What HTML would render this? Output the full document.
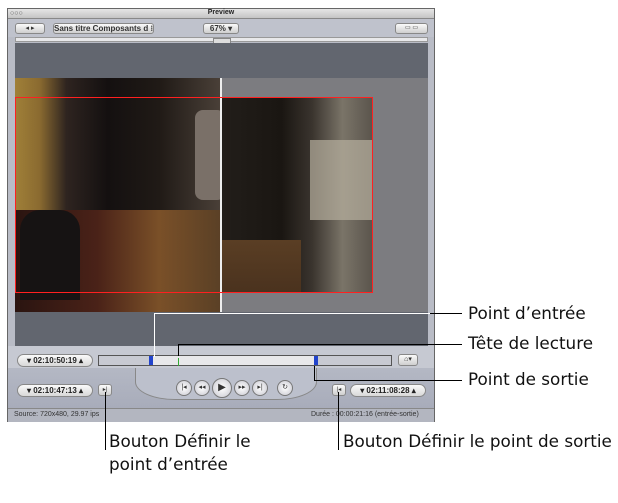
<!DOCTYPE html><html><head><style>
body{margin:0;width:618px;height:503px;background:#fff;position:relative;overflow:hidden;font-family:"Liberation Sans",sans-serif}
.a{position:absolute}
.win{left:7px;top:8px;width:428px;height:414px;background:#b9bcc6;border:1px solid #666;box-sizing:border-box}
.pill{position:absolute;height:11px;border:1px solid #888;border-radius:7px;background:linear-gradient(#fafafa,#d8d8d8);font-size:8px;font-weight:bold;line-height:11px;color:#222;text-align:center}
.btn{position:absolute;border:1px solid #888;border-radius:3px;background:linear-gradient(#fafafa,#cfcfcf);font-size:8px;line-height:11px;text-align:center;color:#333}
.circ{position:absolute;width:14px;height:14px;border:1px solid #777;border-radius:50%;background:radial-gradient(#fff,#c8c8d0);font-size:7px;line-height:14px;text-align:center;color:#333}
.lab{position:absolute;font-size:16.8px;color:#111;white-space:nowrap;font-family:"DejaVu Sans","Liberation Sans",sans-serif;letter-spacing:0}
.ln{position:absolute;background:#000}
.r{position:absolute;background:#ff2020}
</style></head><body>
<div class="a win"></div>
<div class="a" style="left:8px;top:9px;width:426px;height:9px;background:linear-gradient(#e6e6e6,#c4c4c4);border-bottom:1px solid #888"></div>
<div class="a" style="left:10px;top:10px;font-size:7px;color:#555">○○○</div>
<div class="a" style="left:0;top:9px;width:442px;text-align:center;font-size:7px;font-weight:bold;color:#222">Preview</div>
<div class="a" style="left:8px;top:19px;width:426px;height:18px;background:#bfc2cc"></div>
<div class="btn" style="left:15px;top:23px;width:28px;height:9px;line-height:9px;font-size:7px">◂ ▸</div>
<div class="btn" style="left:53px;top:23px;width:99px;height:9px;line-height:9px;font-weight:bold">Sans titre Composants d ⁝</div>
<div class="btn" style="left:203px;top:23px;width:34px;height:9px;line-height:9px;font-weight:bold">67% ▾</div>
<div class="btn" style="left:395px;top:23px;width:31px;height:9px;line-height:9px;font-size:6px">▭ ▭</div>
<div class="a" style="left:15px;top:37px;width:413px;height:5px;background:#e8e8ea;border:1px solid #999;box-sizing:border-box"></div>
<div class="a" style="left:213px;top:38px;width:16px;height:5px;background:#ddd;border:1px solid #888"></div>
<div class="a" style="left:15px;top:43px;width:413px;height:303px;background:#62666f"></div>
<div class="a" style="left:221px;top:78px;width:207px;height:234px;background:#7c7c80"></div>
<div class="a" style="left:15px;top:78px;width:206px;height:234px;background:linear-gradient(90deg,#a08038 0,#8a6a30 12%,#2e2420 25%,#141010 45%,#201a16 70%,#4a4038 100%)"></div>
<div class="a" style="left:15px;top:210px;width:206px;height:102px;background:linear-gradient(90deg,#2a1410,#4a2218 40%,#7a5028 70%,#5a4026)"></div>
<div class="a" style="left:20px;top:210px;width:60px;height:90px;background:#161313;border-radius:20px 20px 0 0"></div>
<div class="a" style="left:195px;top:110px;width:30px;height:90px;background:#7a7068;border-radius:8px"></div>
<div class="a" style="left:221px;top:97px;width:152px;height:196px;background:linear-gradient(90deg,#221e1a,#1a1612 40%,#3a342e 60%,#7a7468 80%,#5a544c)"></div>
<div class="a" style="left:221px;top:240px;width:80px;height:53px;background:linear-gradient(#5a3e24,#4a321e)"></div>
<div class="a" style="left:310px;top:140px;width:63px;height:80px;background:#b8b0a0;opacity:.7"></div>
<div class="a" style="left:220px;top:78px;width:2px;height:234px;background:#eee"></div>
<div class="r" style="left:15px;top:97px;width:358px;height:1px"></div>
<div class="r" style="left:15px;top:292px;width:358px;height:1px"></div>
<div class="r" style="left:15px;top:97px;width:1px;height:196px"></div>
<div class="r" style="left:372px;top:97px;width:1px;height:196px"></div>
<div class="a" style="left:8px;top:346px;width:426px;height:22px;background:#c6c9d2"></div>
<div class="pill" style="left:17px;top:354px;width:74px">▾ 02:10:50:19 ▴</div>
<div class="a" style="left:98px;top:355px;width:294px;height:11px;background:#c8cad2;border:1px solid #555;box-sizing:border-box"></div>
<div class="a" style="left:153px;top:356px;width:162px;height:9px;background:#e8e8ea"></div>
<div class="a" style="left:149px;top:356px;width:4px;height:9px;background:#2244cc"></div>
<div class="a" style="left:314px;top:356px;width:4px;height:9px;background:#2244cc"></div>
<div class="a" style="left:178px;top:358px;width:1px;height:8px;background:#3a3"></div>
<div class="btn" style="left:398px;top:354px;width:18px;height:10px;line-height:10px;font-size:7px">⌂▾</div>
<div class="a" style="left:8px;top:368px;width:426px;height:40px;background:linear-gradient(#b4b8c4,#a8acba)"></div>
<div class="a" style="left:135px;top:368px;width:180px;height:31px;background:#bcc0cc;border:1px solid #888;border-top:none;border-radius:0 0 40px 40px/0 0 18px 18px"></div>
<div class="pill" style="left:17px;top:384px;width:74px">▾ 02:10:47:13 ▴</div>
<div class="btn" style="left:98px;top:384px;width:12px;height:10px;line-height:10px;font-size:6px">▸|</div>
<div class="btn" style="left:332px;top:384px;width:12px;height:10px;line-height:10px;font-size:6px">|◂</div>
<div class="pill" style="left:350px;top:384px;width:74px">▾ 02:11:08:28 ▴</div>
<div class="circ" style="left:176px;top:380px">|◂</div>
<div class="circ" style="left:194px;top:380px">◂◂</div>
<div class="circ" style="left:212px;top:378px;width:18px;height:18px;line-height:18px;font-size:10px">▶</div>
<div class="circ" style="left:234px;top:380px">▸▸</div>
<div class="circ" style="left:252px;top:380px">▸|</div>
<div class="circ" style="left:277px;top:380px">↻</div>
<div class="a" style="left:8px;top:408px;width:426px;height:13px;background:#b3b6c0;border-top:1px solid #888"></div>
<div class="a" style="left:14px;top:411px;font-size:7px;color:#333">Source: 720x480, 29.97 ips</div>
<div class="a" style="left:311px;top:411px;font-size:7px;color:#333">Durée : 00:00:21:16 (entrée-sortie)</div>
<div class="a" style="left:154px;top:313px;width:276px;height:1px;background:#fff"></div>
<div class="a" style="left:154px;top:313px;width:1px;height:44px;background:#fff"></div>
<div class="ln" style="left:430px;top:313px;width:32px;height:1px"></div>
<div class="ln" style="left:178px;top:344px;width:284px;height:1px"></div>
<div class="ln" style="left:178px;top:344px;width:1px;height:12px"></div>
<div class="ln" style="left:314px;top:366px;width:1px;height:14px"></div>
<div class="ln" style="left:314px;top:380px;width:148px;height:1px"></div>
<div class="ln" style="left:105px;top:392px;width:1px;height:58px"></div>
<div class="ln" style="left:338px;top:392px;width:1px;height:58px"></div>
<div class="lab" style="left:468px;top:303px">Point d’entrée</div>
<div class="lab" style="left:468px;top:333px">Tête de lecture</div>
<div class="lab" style="left:468px;top:369px">Point de sortie</div>
<div class="lab" style="left:109px;top:431px">Bouton Définir le</div>
<div class="lab" style="left:109px;top:454px">point d’entrée</div>
<div class="lab" style="left:343px;top:431px">Bouton Définir le point de sortie</div>
</body></html>
